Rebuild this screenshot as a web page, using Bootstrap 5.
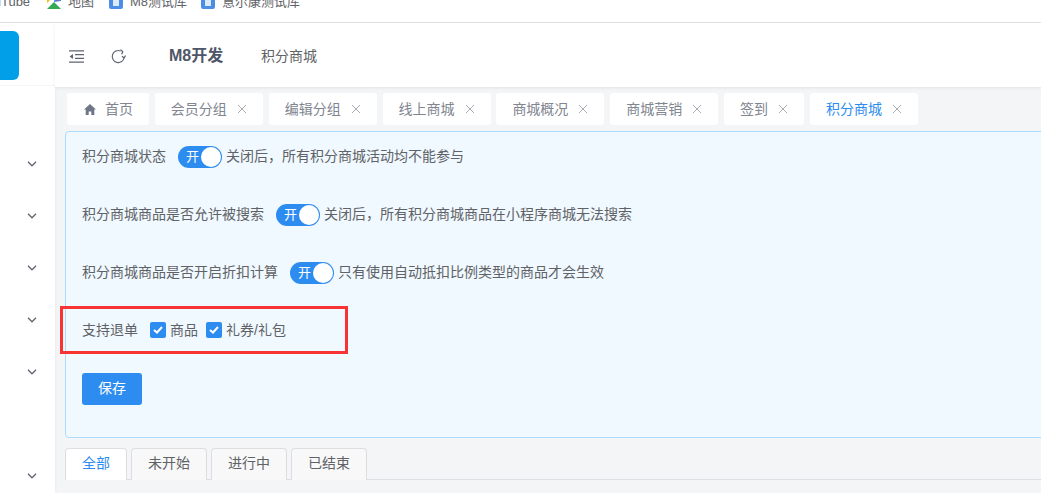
<!DOCTYPE html>
<html lang="zh">
<head>
  <meta charset="UTF-8">
  <title>积分商城</title>
  <link href="https://cdn.jsdelivr.net/npm/bootstrap@5.3.2/dist/css/bootstrap.min.css" rel="stylesheet">
  <style>
    html, body { height: 100%; overflow: hidden; }
    body { font-family: "Liberation Sans", "Noto Sans CJK SC", sans-serif; font-size: 14px; color: #606266; background: #f4f5f7; position: relative; }
    .bookmarks { height: 23px; background: #fff; border-bottom: 1px solid #e3e3e3; overflow: hidden; font-size: 13px; color: #5f6368; white-space: nowrap; }
    .bookmarks .mark-row { margin-top: -8px; margin-left: -21px; }
    .bm-item { display: flex; align-items: center; gap: 6px; }
    .shell { height: 470px; }
    .side-bar { width: 55px; flex: none; background: #fff; box-shadow: 1px 0 3px rgba(0,0,0,.04); }
    .logo-wrap { height: 63px; padding-top: 8px; border-bottom: 1px solid #f5f5f5; }
    .logo-box { width: 30px; height: 49px; margin-left: -11px; background: #009fe8; border-radius: 6px; }
    .side-arrow { height: 52px; display: flex; align-items: center; padding-left: 27px; }
    .side-gap { height: 52px; }
    .main-area { flex: 1; min-width: 0; }
    .top-head { height: 64px; background: #fff; box-shadow: 0 1px 3px rgba(0,0,0,.08); padding: 2px 0 0 14px; }
    .app-name { font-size: 16px; font-weight: 700; color: #4e5668; margin-left: 43px; width: 92px; }
    .crumb { color: #606266; font-size: 14px; }
    .refresh-ico { margin-left: 27px; }
    .tab-strip { padding: 6px 0 0 12px; gap: 5.85px; height: 44px; white-space: nowrap; }
    .tab-chip { height: 32px; background: #fff; border-radius: 3px; padding: 0 16px; color: #808590; display: flex; align-items: center; gap: 10px; }
    .tab-chip.home-chip { padding-left: 17px; gap: 9px; }
    .tab-chip.on { color: #2d8cf0; }
    .tab-x { color: #a9adb3; width: 10px; height: 10px; }
    .tip-panel { margin-left: 10px; margin-right: -4px; height: 307px; background: #f0f9ff; border: 1px solid #abdcff; border-radius: 4px; padding: 13px 16px 0; }
    .form-line { height: 24px; display: flex; align-items: center; padding-bottom: 2px; }
    .form-line + .form-line { margin-top: 34px; }
    .switch-on { width: 44px; height: 22px; border-radius: 11px; background: #2d8cf0; color: #fff; position: relative; margin: 2px 4px 0 12px; font-size: 13px; line-height: 21px; padding-left: 8px; flex: none; }
    .switch-on::after { content: ""; position: absolute; right: 1px; top: 1px; width: 20px; height: 20px; border-radius: 50%; background: #fff; }
    .tick-box { width: 16px; height: 16px; background: #2d8cf0; border-radius: 2px; display: inline-flex; align-items: center; justify-content: center; margin-right: 4px; flex: none; }
    .save-btn { width: 60px; height: 32px; background: #2d8cf0; border: 0; border-radius: 3px; color: #fff; font-size: 14px; padding: 0 0 2px; margin-top: 30px; }
    .sub-tabs { margin-left: 10px; margin-top: 10px; height: 32px; gap: 4px; border-bottom: 1px solid #dcdee2; }
    .sub-tab { width: 76px; height: 32px; border: 1px solid #dcdee2; border-bottom: 0; border-radius: 4px 4px 0 0; background: #f8f8f9; display: flex; align-items: center; justify-content: center; color: #606266; padding-bottom: 2px; }
    .sub-tab.first { width: 62px; background: #fff; color: #2d8cf0; }
    .red-mark { position: absolute; left: 60px; top: 306px; width: 288px; height: 48px; border: 3px solid #f73333; }
  </style>
</head>
<body>
  <div class="bookmarks">
    <div class="mark-row d-flex">
      <span style="width:52px">YouTube</span>
      <div class="bm-item" style="margin-left:15px">
        <svg width="16" height="16" viewBox="0 0 16 16"><path d="M1 15 8 8l7 7z" fill="#34a853"/><path d="M1 1h8L1 9z" fill="#fbbc04"/><path d="M9 1h6v6L8 8z" fill="#4285f4"/><circle cx="11" cy="4" r="2.5" fill="#ea4335"/></svg>
        <span>地图</span>
      </div>
      <div class="bm-item" style="margin-left:14px">
        <svg width="16" height="16" viewBox="0 0 16 16"><rect x="1" y="1" width="14" height="14" rx="2" fill="#4a8ee8"/><rect x="5" y="4" width="6" height="8" fill="#dbe9fb"/></svg>
        <span>M8测试库</span>
      </div>
      <div class="bm-item" style="margin-left:13px">
        <svg width="16" height="16" viewBox="0 0 16 16"><rect x="1" y="1" width="14" height="14" rx="2" fill="#4a8ee8"/><rect x="5" y="4" width="6" height="8" fill="#dbe9fb"/></svg>
        <span>意尔康测试库</span>
      </div>
    </div>
  </div>

  <div class="shell d-flex">
    <div class="side-bar">
      <div class="logo-wrap"><div class="logo-box"></div></div>
      <div style="margin-top:52px">
        <div class="side-arrow"><svg width="10" height="6" viewBox="0 0 10 6" fill="none" stroke="#5f6672" stroke-width="1.3"><path d="M1 .8l4 4 4-4"/></svg></div>
        <div class="side-arrow"><svg width="10" height="6" viewBox="0 0 10 6" fill="none" stroke="#5f6672" stroke-width="1.3"><path d="M1 .8l4 4 4-4"/></svg></div>
        <div class="side-arrow"><svg width="10" height="6" viewBox="0 0 10 6" fill="none" stroke="#5f6672" stroke-width="1.3"><path d="M1 .8l4 4 4-4"/></svg></div>
        <div class="side-arrow"><svg width="10" height="6" viewBox="0 0 10 6" fill="none" stroke="#5f6672" stroke-width="1.3"><path d="M1 .8l4 4 4-4"/></svg></div>
        <div class="side-arrow"><svg width="10" height="6" viewBox="0 0 10 6" fill="none" stroke="#5f6672" stroke-width="1.3"><path d="M1 .8l4 4 4-4"/></svg></div>
        <div class="side-gap"></div>
        <div class="side-arrow"><svg width="10" height="6" viewBox="0 0 10 6" fill="none" stroke="#5f6672" stroke-width="1.3"><path d="M1 .8l4 4 4-4"/></svg></div>
      </div>
    </div>

    <div class="main-area">
      <div class="top-head d-flex align-items-center">
        <svg width="15" height="13" viewBox="0 0 15 13" fill="none" stroke="#5f6672" stroke-width="1.2"><path d="M0 .8h15M6 4.6h9M6 8.4h9M0 12.2h15"/><path d="M4 4.1 .6 6.5 4 8.9z" fill="#5f6672" stroke="none"/></svg>
        <svg class="refresh-ico" width="15" height="15" viewBox="0 0 15 15" fill="none" stroke="#5f6672" stroke-width="1.2"><path d="M13.2 8.5A6 6 0 1 1 9.6 2"/><path d="M9.4 .6l2.4 2.1-1.2 2.6M14.6 6.6l-1.5 2.2-2.2-1.5"/></svg>
        <span class="app-name">M8开发</span>
        <span class="crumb">积分商城</span>
      </div>

      <div class="tab-strip d-flex">
        <div class="tab-chip home-chip"><svg width="12" height="11" viewBox="0 0 12 11"><path d="M6 0 0 5.5h1.7V11h3V7.5h2.6V11h3V5.5H12z" fill="#6f7686"/></svg><span>首页</span></div>
        <div class="tab-chip">会员分组<svg class="tab-x" viewBox="0 0 10 10" fill="none" stroke="currentColor"><path d="M1 1l8 8M9 1l-8 8"/></svg></div>
        <div class="tab-chip">编辑分组<svg class="tab-x" viewBox="0 0 10 10" fill="none" stroke="currentColor"><path d="M1 1l8 8M9 1l-8 8"/></svg></div>
        <div class="tab-chip">线上商城<svg class="tab-x" viewBox="0 0 10 10" fill="none" stroke="currentColor"><path d="M1 1l8 8M9 1l-8 8"/></svg></div>
        <div class="tab-chip">商城概况<svg class="tab-x" viewBox="0 0 10 10" fill="none" stroke="currentColor"><path d="M1 1l8 8M9 1l-8 8"/></svg></div>
        <div class="tab-chip">商城营销<svg class="tab-x" viewBox="0 0 10 10" fill="none" stroke="currentColor"><path d="M1 1l8 8M9 1l-8 8"/></svg></div>
        <div class="tab-chip">签到<svg class="tab-x" viewBox="0 0 10 10" fill="none" stroke="currentColor"><path d="M1 1l8 8M9 1l-8 8"/></svg></div>
        <div class="tab-chip on">积分商城<svg class="tab-x" viewBox="0 0 10 10" fill="none" stroke="currentColor"><path d="M1 1l8 8M9 1l-8 8"/></svg></div>
      </div>

      <div class="tip-panel">
        <div class="form-line">积分商城状态<span class="switch-on">开</span>关闭后，所有积分商城活动均不能参与</div>
        <div class="form-line">积分商城商品是否允许被搜索<span class="switch-on">开</span>关闭后，所有积分商城商品在小程序商城无法搜索</div>
        <div class="form-line">积分商城商品是否开启折扣计算<span class="switch-on">开</span>只有使用自动抵扣比例类型的商品才会生效</div>
        <div class="form-line">
          <span class="me-2 pe-1">支持退单</span>
          <span class="tick-box"><svg width="10" height="8" viewBox="0 0 10 8" fill="none" stroke="#fff" stroke-width="2"><path d="M1 4l3 2.5L9 1"/></svg></span>
          <span class="me-2">商品</span>
          <span class="tick-box"><svg width="10" height="8" viewBox="0 0 10 8" fill="none" stroke="#fff" stroke-width="2"><path d="M1 4l3 2.5L9 1"/></svg></span>
          <span>礼券/礼包</span>
        </div>
        <button class="btn save-btn" type="button">保存</button>
      </div>

      <div class="sub-tabs d-flex">
        <div class="sub-tab first">全部</div>
        <div class="sub-tab">未开始</div>
        <div class="sub-tab">进行中</div>
        <div class="sub-tab">已结束</div>
      </div>
    </div>
  </div>

  <div class="red-mark"></div>
  <script src="https://cdn.jsdelivr.net/npm/bootstrap@5.3.2/dist/js/bootstrap.bundle.min.js"></script>
</body>
</html>
